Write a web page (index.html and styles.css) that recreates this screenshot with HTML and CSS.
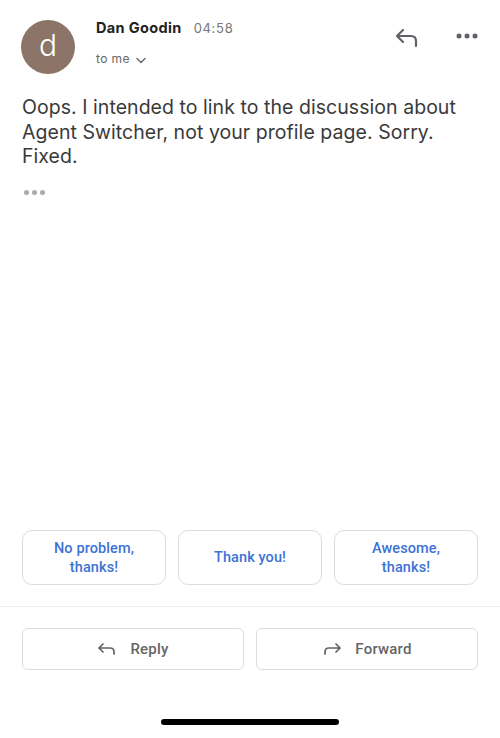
FILE: index.html
```html
<!DOCTYPE html>
<html>
<head>
<meta charset="utf-8">
<link rel="stylesheet" href="styles.css">
</head>
<body>
<div class="screen">
  <header class="head">
    <div class="avatar">d</div>
    <div class="meta">
      <div class="from"><span class="name">Dan Goodin</span><span class="time">04:58</span></div>
      <div class="to">to me
        <svg class="chev" width="10" height="7" viewBox="0 0 10 7"><path d="M1 1.5 L5 5.5 L9 1.5" fill="none" stroke="#666" stroke-width="1.4" stroke-linecap="round" stroke-linejoin="round"/></svg>
      </div>
    </div>
    <div class="actions">
      <svg class="reply-ic" width="26" height="22" viewBox="0 0 26 22"><path d="M9 3 L3 9 L9 15 M3 9 H17 Q22 9 22 14 V19" fill="none" stroke="#5f6368" stroke-width="2.2" stroke-linecap="round" stroke-linejoin="round"/></svg>
      <svg class="more-ic" width="22" height="6" viewBox="0 0 22 6"><circle cx="3" cy="3" r="2.5" fill="#5f6368"/><circle cx="11" cy="3" r="2.5" fill="#5f6368"/><circle cx="19" cy="3" r="2.5" fill="#5f6368"/></svg>
    </div>
  </header>
  <p class="body-text">Oops. I intended to link to the discussion about Agent Switcher, not your profile page. Sorry. Fixed.</p>
  <div class="ellipsis"><span></span><span></span><span></span></div>
  <div class="spacer"></div>
  <div class="suggestions">
    <div class="chip">No problem,<br>thanks!</div>
    <div class="chip">Thank you!</div>
    <div class="chip">Awesome,<br>thanks!</div>
  </div>
  <div class="divider"></div>
  <div class="bottom">
    <div class="btn">
      <svg width="20" height="14" viewBox="0 0 20 14"><path d="M6 2 L2 6 L6 10 M2 6 H13 Q17 6 17 10 V12" fill="none" stroke="#5f6368" stroke-width="1.7" stroke-linecap="round" stroke-linejoin="round"/></svg>
      <span>Reply</span>
    </div>
    <div class="btn">
      <svg width="20" height="14" viewBox="0 0 20 14"><path d="M14 2 L18 6 L14 10 M18 6 H7 Q3 6 3 10 V12" fill="none" stroke="#5f6368" stroke-width="1.7" stroke-linecap="round" stroke-linejoin="round"/></svg>
      <span>Forward</span>
    </div>
  </div>
  <div class="home-bar"></div>
</div>
</body>
</html>
```
FILE: styles.css
```css
* { box-sizing: border-box; }
html, body { margin: 0; padding: 0; background: #fff; }
body { font-family: Inter, "Noto Sans", sans-serif; color: #333; }
.screen { width: 500px; height: 738px; display: flex; flex-direction: column; }
.head { display: flex; align-items: flex-start; padding: 20px 22px 0 21px; height: 88px; }
.avatar { width: 54px; height: 54px; border-radius: 50%; background: #8c7468; color: #fff; font-size: 30px; display: flex; align-items: center; justify-content: center; flex-shrink: 0; padding-bottom: 4px; font-weight: 300; }
.meta { margin-left: 21px; flex: 1; }
.from { display: flex; align-items: baseline; margin-top: -1px; }
.name { font-weight: 700; font-size: 14.5px; color: #222; letter-spacing: 0.35px; }
.time { font-size: 13px; color: #777; margin-left: 12px; letter-spacing: 0.7px; }
.to { margin-top: 15px; font-size: 12px; color: #666; display: flex; align-items: center; letter-spacing: 0.4px; }
.chev { margin-left: 6px; margin-top: 3px; }
.actions { display: flex; align-items: center; gap: 36px; margin-top: 7px; }
.more-ic { margin-top: -4px; }
.body-text { margin: 7px 22px 0 22px; font-size: 19.5px; line-height: 24.5px; color: #3a3a3a; font-weight: 400; letter-spacing: 0.05px; }
.ellipsis { display: flex; gap: 3px; margin: 21px 0 0 24px; }
.ellipsis span { width: 5px; height: 5px; border-radius: 50%; background: #aaa; }
.spacer { flex: 1; }
.suggestions { display: flex; gap: 12px; padding: 0 22px; }
.chip { flex: 1; height: 55px; border: 1.5px solid #dcdcdc; border-radius: 10px; display: flex; align-items: center; justify-content: center; text-align: center; color: #3d72d6; font-family: Roboto, "Open Sans", sans-serif; font-size: 14.5px; line-height: 19px; font-weight: 500; letter-spacing: 0.1px; }
.divider { height: 1px; background: #eee; margin-top: 21px; }
.bottom { display: flex; gap: 12px; padding: 21px 22px 0 22px; }
.btn { flex: 1; height: 42px; border: 1.5px solid #dcdcdc; border-radius: 6px; display: flex; align-items: center; justify-content: center; gap: 13px; color: #666; font-family: Roboto, "Open Sans", sans-serif; font-size: 15px; font-weight: 500; letter-spacing: 0.2px; }
.home-bar { width: 178px; height: 6px; border-radius: 3px; background: #000; margin: 49px auto 13px; }
```
